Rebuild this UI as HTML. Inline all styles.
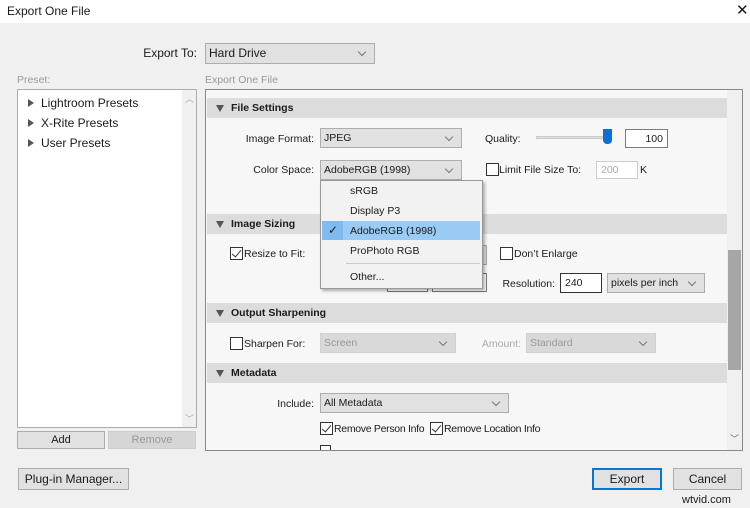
<!DOCTYPE html>
<html><head><meta charset="utf-8"><style>
*{box-sizing:border-box;margin:0;padding:0}
body{width:750px;height:508px;background:#f0f0f0;font-family:"Liberation Sans",sans-serif;font-size:10.5px;color:#1a1a1a;position:relative;overflow:hidden}
.a{position:absolute;white-space:nowrap}
.r{position:absolute;white-space:nowrap;text-align:right}
.sel{position:absolute;background:#e1e1e1;border:1px solid #adadad;padding-left:3px;line-height:18px}
.sel.dis{background:#d9d9d9;border-color:#d0d0d0;color:#999}
.sel:after{content:"";position:absolute;right:9px;top:5px;width:5px;height:5px;border-right:1px solid #777;border-bottom:1px solid #777;transform:rotate(45deg)}
.inp{position:absolute;background:#fff;border:1px solid #7a7a7a;line-height:17px;padding:0 4px}
.hdr{position:absolute;left:207px;width:520px;height:20px;background:#dcdcdc;font-weight:bold;line-height:21px;padding-left:24px}
.hdr:before{content:"";position:absolute;left:9px;top:7px;border-left:4px solid transparent;border-right:4px solid transparent;border-top:7px solid #555}
.cb{position:absolute;width:13px;height:13px;border:1px solid #333;background:#fff}
.cb.on:after{content:"";position:absolute;left:3px;top:0px;width:4px;height:8px;border-right:1.5px solid #333;border-bottom:1.5px solid #333;transform:rotate(40deg)}
.btn{position:absolute;background:#e1e1e1;border:1px solid #adadad;text-align:center;font-size:12px}
.tri{position:absolute;border-top:4px solid transparent;border-bottom:4px solid transparent;border-left:6px solid #555}
</style></head><body>
<div class="a" style="left:0;top:0;width:750px;height:23px;background:#fff"></div>
<div class="a" style="left:7px;top:4px;font-size:12px">Export One File</div>
<div class="a" style="left:736px;top:1px;font-size:15px">✕</div>

<div class="r" style="right:553px;top:46px;font-size:12px">Export To:</div>
<div class="sel" style="left:205px;top:43px;width:170px;height:21px;font-size:12px;line-height:19px">Hard Drive</div>
<div class="a" style="left:17px;top:74px;color:#999">Preset:</div>
<div class="a" style="left:205px;top:74px;color:#999">Export One File</div>

<div class="a" style="left:17px;top:89px;width:180px;height:339px;background:#fff;border:1px solid #adadad"></div>
<div class="a" style="left:182px;top:90px;width:14px;height:337px;background:#f0f0f0"></div>
<div class="a" style="left:185px;top:92px;color:#aaa;font-size:9px">︿</div>
<div class="a" style="left:185px;top:412px;color:#aaa;font-size:9px">﹀</div>
<div class="tri" style="left:28px;top:99px"></div><div class="a" style="left:41px;top:96px;font-size:12px">Lightroom Presets</div>
<div class="tri" style="left:28px;top:119px"></div><div class="a" style="left:41px;top:116px;font-size:12px">X-Rite Presets</div>
<div class="tri" style="left:28px;top:139px"></div><div class="a" style="left:41px;top:136px;font-size:12px">User Presets</div>
<div class="btn" style="left:17px;top:431px;width:88px;height:18px;line-height:16px;font-size:11px">Add</div>
<div class="btn" style="left:108px;top:431px;width:88px;height:18px;line-height:16px;font-size:11px;background:#d6d6d6;border-color:#ccc;color:#999">Remove</div>

<div class="a" style="left:205px;top:89px;width:538px;height:362px;background:#f7f7f7;border:1px solid #888"></div>
<div class="a" style="left:727px;top:90px;width:15px;height:360px;background:#f0f0f0"></div>
<div class="a" style="left:728px;top:250px;width:13px;height:120px;background:#a6a6a6"></div>
<div class="a" style="left:730px;top:432px;color:#666;font-size:9px">﹀</div>

<div class="hdr" style="top:98px">File Settings</div>
<div class="r" style="right:436px;top:133px">Image Format:</div>
<div class="sel" style="left:320px;top:128px;width:142px;height:20px">JPEG</div>
<div class="a" style="left:485px;top:133px">Quality:</div>
<div class="a" style="left:536px;top:136px;width:70px;height:3px;background:#ddd;border:1px solid #ccc"></div>
<div class="a" style="left:603px;top:129px;width:9px;height:15px;background:#0a6fd6;border-radius:0 0 4px 4px"></div>
<div class="inp" style="left:625px;top:129px;width:43px;height:19px;text-align:right;line-height:18px">100</div>
<div class="r" style="right:436px;top:164px">Color Space:</div>
<div class="sel" style="left:320px;top:160px;width:142px;height:20px">AdobeRGB (1998)</div>
<div class="cb" style="left:486px;top:163px"></div>
<div class="a" style="left:499px;top:164px">Limit File Size To:</div>
<div class="inp" style="left:596px;top:161px;width:42px;height:18px;color:#aaa;border-color:#ccc">200</div>
<div class="a" style="left:640px;top:164px">K</div>

<div class="hdr" style="top:214px">Image Sizing</div>
<div class="cb on" style="left:230px;top:247px"></div>
<div class="a" style="left:244px;top:248px">Resize to Fit:</div>
<div class="sel" style="left:400px;top:245px;width:87px;height:20px"></div>
<div class="inp" style="left:387px;top:273px;width:41px;height:19px"></div>
<div class="inp" style="left:432px;top:273px;width:55px;height:19px"></div>
<div class="cb" style="left:500px;top:247px"></div>
<div class="a" style="left:514px;top:248px">Don’t Enlarge</div>
<div class="r" style="right:195px;top:278px">Resolution:</div>
<div class="inp" style="left:560px;top:273px;width:42px;height:20px;border-color:#333;line-height:18px">240</div>
<div class="sel" style="left:607px;top:273px;width:98px;height:20px">pixels per inch</div>

<div class="hdr" style="top:303px">Output Sharpening</div>
<div class="cb" style="left:230px;top:337px"></div>
<div class="a" style="left:244px;top:338px">Sharpen For:</div>
<div class="sel dis" style="left:320px;top:333px;width:136px;height:20px">Screen</div>
<div class="r" style="right:229px;top:338px;color:#aaa">Amount:</div>
<div class="sel dis" style="left:526px;top:333px;width:130px;height:20px">Standard</div>

<div class="hdr" style="top:363px">Metadata</div>
<div class="r" style="right:436px;top:398px">Include:</div>
<div class="sel" style="left:320px;top:393px;width:189px;height:20px">All Metadata</div>
<div class="cb on" style="left:320px;top:422px"></div>
<div class="a" style="left:334px;top:423px;letter-spacing:-0.3px">Remove Person Info</div>
<div class="cb on" style="left:430px;top:422px"></div>
<div class="a" style="left:444px;top:423px;letter-spacing:-0.3px">Remove Location Info</div>
<div class="a" style="left:320px;top:445px;width:11px;height:5px;border:1px solid #333;border-bottom:none;background:#fff"></div>

<div class="a" style="left:320px;top:180px;width:163px;height:109px;background:#f2f2f2;border:1px solid #999;box-shadow:2px 2px 3px rgba(0,0,0,.3)"></div>
<div class="a" style="left:322px;top:221px;width:158px;height:19px;background:#99cbf5"></div>
<div class="a" style="left:322px;top:221px;width:21px;height:19px;background:#7fbbee"></div>
<div class="a" style="left:328px;top:223px;font-size:12px">✓</div>
<div class="a" style="left:350px;top:185px">sRGB</div>
<div class="a" style="left:350px;top:205px">Display P3</div>
<div class="a" style="left:350px;top:225px">AdobeRGB (1998)</div>
<div class="a" style="left:350px;top:245px">ProPhoto RGB</div>
<div class="a" style="left:346px;top:263px;width:134px;height:1px;background:#ccc"></div>
<div class="a" style="left:350px;top:271px">Other...</div>

<div class="btn" style="left:18px;top:468px;width:111px;height:22px;line-height:20px">Plug-in Manager...</div>
<div class="btn" style="left:592px;top:468px;width:70px;height:22px;line-height:19px;border:2px solid #0078d7">Export</div>
<div class="btn" style="left:673px;top:468px;width:69px;height:22px;line-height:20px">Cancel</div>
<div class="a" style="left:682px;top:494px;font-size:11px">wtvid.com</div>
</body></html>
